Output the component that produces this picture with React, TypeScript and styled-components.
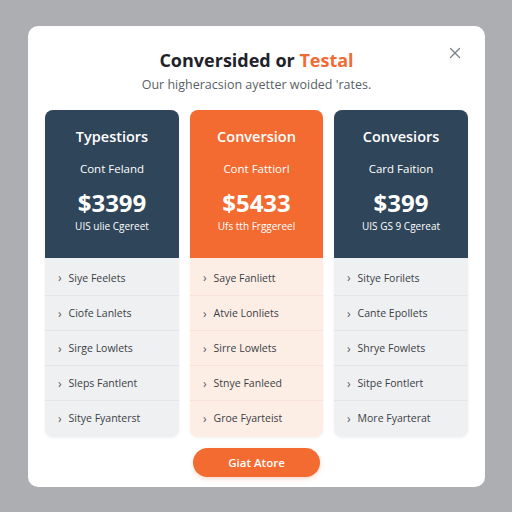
import React from "react"
import styled, { createGlobalStyle } from "styled-components"

const Global = createGlobalStyle`
  html, body { margin: 0; padding: 0; }
  body {
    width: 512px;
    height: 512px;
    background: #adaeb2;
    font-family: "Open Sans", "Liberation Sans", sans-serif;
    overflow: hidden;
  }
`

const Page = styled.div`
  width: 512px;
  height: 512px;
  padding: 26px 27px 25px 28px;
  box-sizing: border-box;
`

const Modal = styled.div`
  position: relative;
  height: 100%;
  background: #ffffff;
  border-radius: 10px;
  padding: 22px 17px 0 17px;
  box-sizing: border-box;
  display: flex;
  flex-direction: column;
  align-items: center;
`

const Close = styled.button`
  position: absolute;
  top: 19px;
  right: 22px;
  border: 0;
  background: none;
  padding: 0;
  width: 16px;
  height: 16px;
  cursor: pointer;
`

const Title = styled.h1`
  margin: 0;
  font-size: 18px;
  font-weight: 700;
  color: #1f2329;
  line-height: 25px;
  span { color: #f26b35; }
`

const Subtitle = styled.p`
  margin: 4px 0 0;
  font-size: 12.5px;
  color: #5a5f66;
  line-height: 16px;
`

const Plans = styled.div`
  margin-top: 17px;
  width: 100%;
  display: grid;
  grid-template-columns: 134px 133px 134px;
  justify-content: space-between;
`

const Card = styled.div<{ $hot?: boolean }>`
  border-radius: 8px;
  overflow: hidden;
  display: flex;
  flex-direction: column;
  background: ${p => (p.$hot ? "#fdeee5" : "#eff0f2")};
  box-shadow: 0 1px 3px rgba(0, 0, 0, 0.06);
`

const Head = styled.div<{ $hot?: boolean }>`
  height: 148px;
  background: ${p => (p.$hot ? "#f46b32" : "#2f4559")};
  color: #ffffff;
  display: flex;
  flex-direction: column;
  align-items: center;
  padding-top: 17px;
  box-sizing: border-box;
`

const PlanName = styled.div`
  font-size: 14.5px;
  font-weight: 600;
  line-height: 20px;
`

const PlanKind = styled.div`
  margin-top: 14px;
  font-size: 11.5px;
  line-height: 16px;
`

const Price = styled.div`
  margin-top: 11px;
  font-size: 24px;
  font-weight: 700;
  line-height: 30px;
`

const Note = styled.div`
  margin-top: 1px;
  font-size: 10px;
  line-height: 14px;
`

const Features = styled.ul`
  list-style: none;
  margin: 0;
  padding: 2px 0 2px;
`

const Feature = styled.li<{ $hot?: boolean }>`
  height: 34px;
  display: flex;
  align-items: center;
  padding-left: 13px;
  font-size: 10.5px;
  color: #3a3f45;
  border-top: 1px solid ${p => (p.$hot ? "#f6e2d6" : "#e3e5e8")};
  &:first-child { border-top: 0; height: 35px; }
  &::before {
    content: "›";
    font-size: 12px;
    color: #555a60;
    margin-right: 7px;
  }
`

const Footer = styled.div`
  flex: 1;
  display: flex;
  align-items: center;
  justify-content: center;
`

const Cta = styled.button`
  width: 127px;
  height: 29px;
  border: 0;
  border-radius: 15px;
  background: #f46b32;
  color: #ffffff;
  font-family: inherit;
  font-size: 11.5px;
  font-weight: 600;
  box-shadow: 0 2px 4px rgba(244, 107, 50, 0.25);
`

const plans = [
  {
    name: "Typestiors", kind: "Cont Feland", price: "$3399", note: "UIS ulie Cgereet",
    features: ["Siye Feelets", "Ciofe Lanlets", "Sirge Lowlets", "Sleps Fantlent", "Sitye Fyanterst"],
  },
  {
    name: "Conversion", kind: "Cont Fattiorl", price: "$5433", note: "Ufs tth Frggereel", hot: true,
    features: ["Saye Fanliett", "Atvie Lonliets", "Sirre Lowlets", "Stnye Fanleed", "Groe Fyarteist"],
  },
  {
    name: "Convesiors", kind: "Card Faition", price: "$399", note: "UIS GS 9 Cgereat",
    features: ["Sitye Forilets", "Cante Epollets", "Shrye Fowlets", "Sitpe Fontlert", "More Fyarterat"],
  },
]

export default function App() {
  return (
    <Page>
      <Global />
      <Modal>
        <Close aria-label="Close">
          <svg width="16" height="16" viewBox="0 0 16 16">
            <path d="M3.5 3.5 L12.5 12.5 M12.5 3.5 L3.5 12.5" stroke="#7a7f86" strokeWidth="1.3" strokeLinecap="round" />
          </svg>
        </Close>
        <Title>Conversided or <span>Testal</span></Title>
        <Subtitle>Our higheracsion ayetter woided 'rates.</Subtitle>
        <Plans>
          {plans.map(p => (
            <Card key={p.name} $hot={p.hot}>
              <Head $hot={p.hot}>
                <PlanName>{p.name}</PlanName>
                <PlanKind>{p.kind}</PlanKind>
                <Price>{p.price}</Price>
                <Note>{p.note}</Note>
              </Head>
              <Features>
                {p.features.map(f => (
                  <Feature key={f} $hot={p.hot}>{f}</Feature>
                ))}
              </Features>
            </Card>
          ))}
        </Plans>
        <Footer>
          <Cta>Giat Atore</Cta>
        </Footer>
      </Modal>
    </Page>
  )
}
